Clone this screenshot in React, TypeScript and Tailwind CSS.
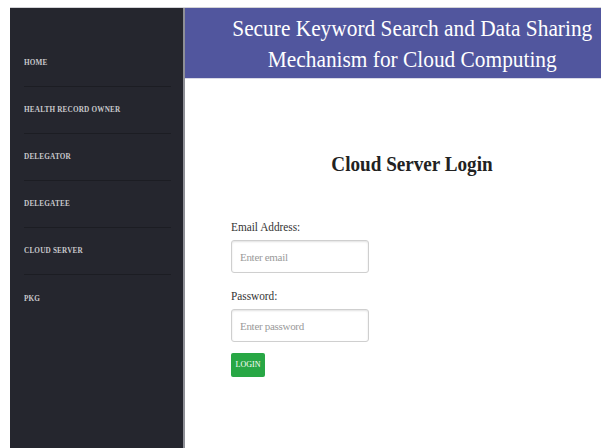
import { useState } from "react";

const menu = ["HOME", "HEALTH RECORD OWNER", "DELEGATOR", "DELEGATEE", "CLOUD SERVER", "PKG"];

const slab = "font-['Liberation_Serif',serif]";
const field =
  "mt-[6px] block w-[138px] h-[33px] px-[8px] text-[11px] tracking-[-0.3px] rounded-[3px] border border-[#cfcfcf] shadow-[inset_0_1px_2px_rgba(0,0,0,0.12)] placeholder:text-[#9a9a9a] outline-none";

const Sidebar = () => (
  <aside className="w-[175px] shrink-0 bg-[#25262e] border-r-2 border-[#8e8f96] pt-[32px]">
    <ul>
      {menu.map((item, i) => (
        <li
          key={item}
          className={`ml-[14px] mr-[12px] h-[47px] flex items-center ${
            i < menu.length - 1 ? "border-b border-[#1c1d23]" : ""
          }`}
        >
          <a className={`${slab} text-[8px] font-bold text-[#c8c8cc] tracking-[0.2px] scale-x-[0.9] origin-left cursor-pointer`}>
            {item}
          </a>
        </li>
      ))}
    </ul>
  </aside>
);

const CloudLogin = () => {
  const [email, setEmail] = useState("");
  const [password, setPassword] = useState("");

  return (
    <div className={`${slab} pl-[38px]`}>
      <h2 className="mt-[72px] text-center text-[22px] font-bold text-[#222] leading-[26px] scale-x-[0.87]">
        Cloud Server Login
      </h2>
      <form className="ml-[8px] mt-[43px] w-[138px]" onSubmit={(e) => e.preventDefault()}>
        <label className="block text-[12px] text-[#333] leading-[14px] scale-x-[0.94] origin-left">Email Address:</label>
        <input
          type="email"
          value={email}
          onChange={(e) => setEmail(e.target.value)}
          placeholder="Enter email"
          className={field}
        />
        <label className="mt-[16px] block text-[12px] text-[#333] leading-[14px] scale-x-[0.94] origin-left">Password:</label>
        <input
          type="password"
          value={password}
          onChange={(e) => setPassword(e.target.value)}
          placeholder="Enter password"
          className={field}
        />
        <button
          type="submit"
          className="mt-[11px] block w-[34px] h-[24px] rounded-[2px] bg-[#28a745] text-white text-[8px] leading-none"
        >
          LOGIN
        </button>
      </form>
    </div>
  );
};

export default function App() {
  return (
    <div className="w-[601px] h-[448px] overflow-hidden bg-white pt-[7px] pl-[10px]">
      <div className="flex h-full border-t border-[#d2d2d6]">
        <Sidebar />
        <main className="flex-1 min-w-0">
          <header className={`${slab} h-[71px] bg-[#51569e] pl-[38px] pt-[5px] flex flex-col items-center text-white text-[24px] leading-[31px] border-b border-[#d9d9e6]`}>
            <h1 className="w-max text-center whitespace-nowrap scale-x-[0.89]">
              <span className="block">Secure Keyword Search and Data Sharing</span>
              <span className="block">Mechanism for Cloud Computing</span>
            </h1>
          </header>
          <CloudLogin />
        </main>
      </div>
    </div>
  );
}
